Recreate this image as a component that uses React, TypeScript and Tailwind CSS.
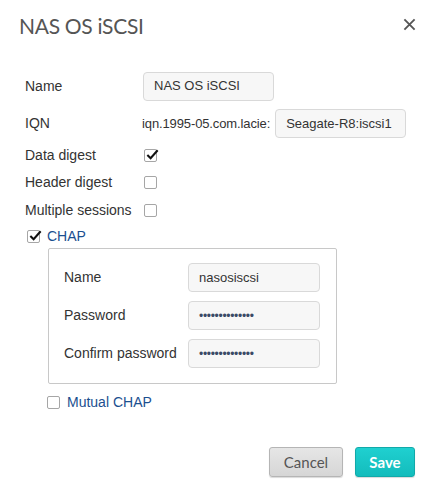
const Check = ({ checked }: { checked?: boolean }) => (
  <span className="relative inline-block w-[13px] h-[13px] border border-[#a6a6a6] rounded-[2px] bg-white shrink-0">
    {checked && (
      <svg viewBox="0 0 16 16" className="absolute left-[0px] top-[-3px] w-[15px] h-[15px]">
        <path d="M2.5 8.5 L6 12 L13.5 3.5" fill="none" stroke="#111" strokeWidth="2.2" />
      </svg>
    )}
  </span>
);

const Field = ({ value, className = "" }: { value: string; className?: string }) => (
  <div
    className={`h-[29px] flex items-center px-[10px] bg-[#f7f7f7] border border-[#d9d9d9] rounded-[4px] text-[13px] text-[#333] ${className}`}
  >
    {value}
  </div>
);

const Dots = () => (
  <div className="h-[29px] w-[132px] flex items-center px-[10px] bg-[#f7f7f7] border border-[#d9d9d9] rounded-[4px]">
    <span className="text-[12px] tracking-[-0.3px] text-[#3a4a66]">••••••••••••••</span>
  </div>
);

const App = () => {
  return (
    <div className="w-[432px] h-[491px] bg-white font-['Liberation_Sans',Arial,sans-serif] text-[#333] relative">
      <div className="flex items-start justify-between pl-[19px] pr-[16px] pt-[13px]">
        <h1 className="font-['Lato',sans-serif] text-[21px] leading-[26px] text-[#555] tracking-[-0.3px]">NAS OS iSCSI</h1>
        <svg viewBox="0 0 14 14" className="w-[13px] h-[13px] mt-[5px]">
          <path d="M1.5 1.5 L12.5 12.5 M12.5 1.5 L1.5 12.5" stroke="#555" strokeWidth="2" />
        </svg>
      </div>

      <div className="pl-[25px] pt-[33px] text-[14px]">
        <div className="flex items-center h-[28px]">
          <span className="w-[118px]">Name</span>
          <Field value="NAS OS iSCSI" className="w-[131px] h-[28px]" />
        </div>
        <div className="flex items-center h-[29px] mt-[9px]">
          <span className="w-[117px]">IQN</span>
          <span className="text-[13px] tracking-[-0.12px] text-[#333]">iqn.1995-05.com.lacie:</span>
          <Field value="Seagate-R8:iscsi1" className="w-[131px] ml-[5px]" />
        </div>
        <div className="flex items-center h-[27px] mt-[4px]">
          <span className="w-[119px]">Data digest</span>
          <Check checked />
        </div>
        <div className="flex items-center h-[27px]">
          <span className="w-[119px]">Header digest</span>
          <Check />
        </div>
        <div className="flex items-center h-[28px]">
          <span className="w-[119px]">Multiple sessions</span>
          <Check />
        </div>
        <div className="flex items-center h-[24px] pl-[2px]">
          <Check checked />
          <span className="ml-[7px] text-[#1b4f8f]">CHAP</span>
        </div>

        <div className="ml-[23px] w-[289px] border border-[#c8c8c8] rounded-[2px] pt-[14px] pb-[15px] pl-[15px] pr-[16px] flex flex-col gap-[9px]">
          <div className="flex items-center justify-between">
            <span>Name</span>
            <Field value="nasosiscsi" className="w-[132px]" />
          </div>
          <div className="flex items-center justify-between">
            <span>Password</span>
            <Dots />
          </div>
          <div className="flex items-center justify-between">
            <span>Confirm password</span>
            <Dots />
          </div>
        </div>

        <div className="flex items-center h-[26px] mt-[5px] pl-[22px]">
          <Check />
          <span className="ml-[7px] text-[#1b4f8f]">Mutual CHAP</span>
        </div>
      </div>

      <div className="flex justify-end gap-[12px] pr-[17px] mt-[32px] font-['Lato',sans-serif] text-[15px]">
        <button className="w-[74px] h-[30px] rounded-[3px] border border-[#b5b5b5] bg-gradient-to-b from-[#e6e6e6] to-[#d6d6d6] text-[#555] shadow-[0_1px_1px_rgba(0,0,0,0.15)]">
          Cancel
        </button>
        <button className="w-[60px] h-[30px] rounded-[3px] border border-[#12a9a9] bg-gradient-to-b from-[#1fd0d0] to-[#13bcbc] text-white font-bold shadow-[0_1px_1px_rgba(0,0,0,0.15)]">
          Save
        </button>
      </div>
    </div>
  );
};

export default App;
